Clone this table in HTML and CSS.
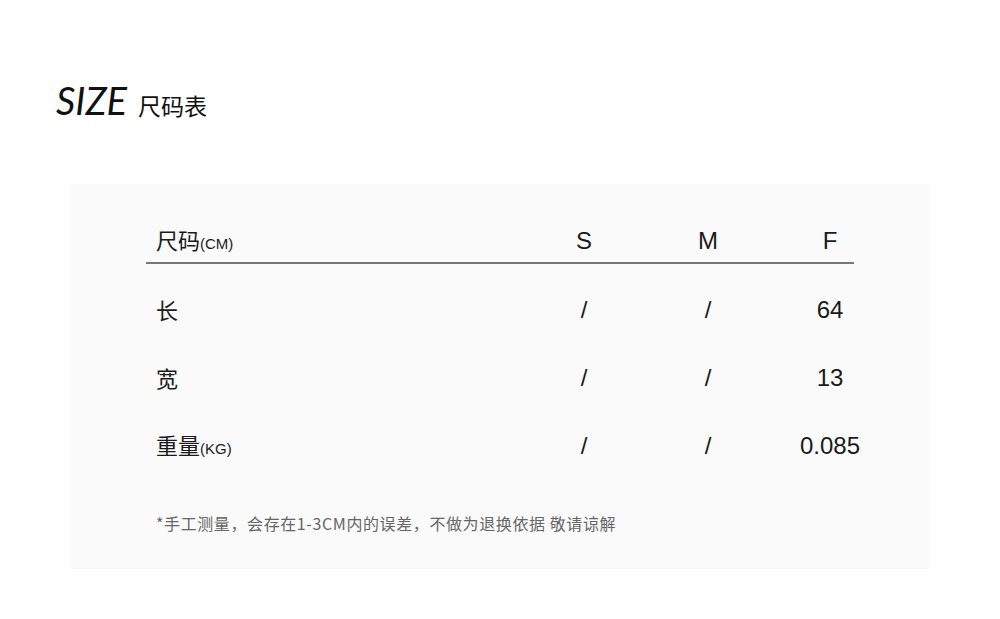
FILE: index.html
```html
<!DOCTYPE html>
<html lang="zh">
<head>
<meta charset="utf-8">
<link rel="stylesheet" href="styles.css">
</head>
<body>
<div class="page">
  <h1 class="title"><span class="title-en">SIZE</span><span class="title-cn">尺码表</span></h1>
  <div class="panel">
    <div class="table">
      <div class="row head">
        <div class="label">尺码<small>(CM)</small></div>
        <div class="cell">S</div>
        <div class="cell">M</div>
        <div class="cell">F</div>
      </div>
      <div class="row first">
        <div class="label">长</div>
        <div class="cell">/</div>
        <div class="cell">/</div>
        <div class="cell">64</div>
      </div>
      <div class="row">
        <div class="label">宽</div>
        <div class="cell">/</div>
        <div class="cell">/</div>
        <div class="cell">13</div>
      </div>
      <div class="row">
        <div class="label">重量<small>(KG)</small></div>
        <div class="cell">/</div>
        <div class="cell">/</div>
        <div class="cell">0.085</div>
      </div>
    </div>
    <p class="note">*手工测量，会存在1-3CM内的误差，不做为退换依据 敬请谅解</p>
  </div>
</div>
</body>
</html>
```
FILE: styles.css
```css
html, body {
  margin: 0;
  padding: 0;
  background: #ffffff;
}
body {
  font-family: "Liberation Sans", "Noto Sans CJK SC", sans-serif;
  color: #111;
}
.page {
  width: 1000px;
  height: 619px;
  padding-top: 78px;
  box-sizing: border-box;
}
.title {
  margin: 0 0 0 56px;
  height: 44px;
  display: flex;
  align-items: baseline;
  font-weight: normal;
}
.title-en {
  font-family: "Lato", "Liberation Sans", sans-serif;
  font-weight: 400;
  font-style: italic;
  font-size: 38px;
  line-height: 44px;
  color: #111;
}
.title-cn {
  font-family: "Noto Sans CJK SC", sans-serif;
  font-size: 23px;
  margin-left: 11px;
  color: #111;
}
.panel {
  margin: 62px 0 0 70px;
  width: 860px;
  background: #fafafa;
  padding: 36px 0 36px 0;
  box-sizing: border-box;
}
.table {
  width: 708px;
  margin-left: 76px;
}
.row {
  display: grid;
  grid-template-columns: 376px 124px 124px 120px;
  height: 68px;
  align-items: center;
  font-size: 24px;
  color: #1a1a1a;
}
.row.head {
  height: 42px;
  border-bottom: 2px solid #777;
}
.row.first {
  margin-top: 12px;
}
.label {
  padding-left: 10px;
  font-family: "Noto Sans CJK SC", sans-serif;
  font-size: 22px;
  line-height: 1;
  display: flex;
  align-items: baseline;
  margin-top: -3px;
}
.label small {
  font-family: "Liberation Sans", sans-serif;
  font-size: 15px;
}
.cell {
  text-align: center;
  line-height: 1;
}
.note {
  margin: 33px 0 0 86px;
  font-family: "Noto Sans CJK SC", sans-serif;
  font-size: 16px;
  letter-spacing: 0.6px;
  line-height: 20px;
  color: #666;
}
```
